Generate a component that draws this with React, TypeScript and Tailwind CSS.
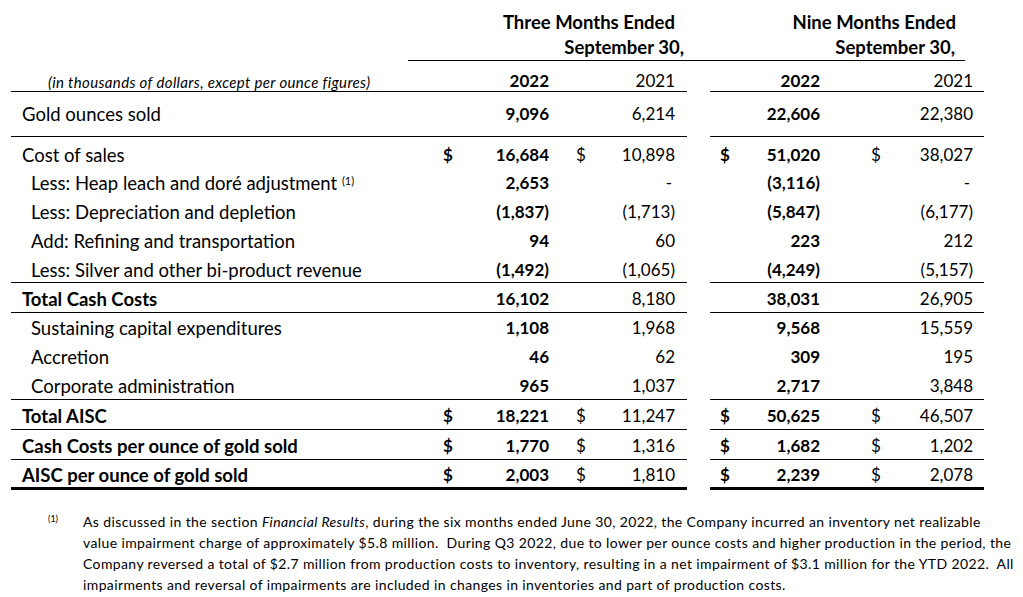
import React from "react";

type Cells = {
  a22: string;
  a21: string;
  b22: string;
  b21: string;
  dollar?: boolean;
};

type RowProps = {
  label: React.ReactNode;
  cells: Cells;
  h: string;
  pt: string;
  border?: "thin" | "thick" | "none";
  variant?: "main" | "sub" | "total";
};

const font = { fontFamily: "Lato, 'Liberation Sans', sans-serif" };

function Row({ label, cells, h, pt, border = "none", variant = "main" }: RowProps) {
  const line =
    border === "thin"
      ? "border-b border-black"
      : border === "thick"
      ? "border-b-[3px] border-black"
      : "";
  const labelCls =
    variant === "sub"
      ? "pl-[20px]"
      : variant === "total"
      ? "pl-[11px] font-bold"
      : "pl-[11px]";

  return (
    <div className="flex">
      {/* three months */}
      <div
        className={`grid w-[676px] grid-cols-[432px_14px_92px_39px_87px_12px] leading-[20px] ${h} ${pt} ${line}`}
      >
        <div className={`whitespace-nowrap text-[18.5px] ${labelCls}`}>{label}</div>
        <div className="font-bold">{cells.dollar ? "$" : ""}</div>
        <div className="text-right font-bold">{cells.a22}</div>
        <div className="pl-[27px]">{cells.dollar ? "$" : ""}</div>
        <div className={`text-right ${cells.a21 === "-" ? "pr-[3px]" : ""}`}>{cells.a21}</div>
        <div />
      </div>
      <div className="w-[23px]" />
      {/* nine months */}
      <div
        className={`grid w-[274px] grid-cols-[10px_14px_86px_63px_90px_11px] leading-[20px] ${h} ${pt} ${line}`}
      >
        <div />
        <div className="font-bold">{cells.dollar ? "$" : ""}</div>
        <div className="text-right font-bold">{cells.b22}</div>
        <div className="pl-[51px]">{cells.dollar ? "$" : ""}</div>
        <div className={`text-right ${cells.b21 === "-" ? "pr-[3px]" : ""}`}>{cells.b21}</div>
        <div />
      </div>
    </div>
  );
}

export default function App() {
  return (
    <div className="min-h-[597px] w-[1023px] bg-white pl-[11px] text-[17px] text-black" style={font}>
      {/* period headers */}
      <div className="ml-[397px] flex h-[61px] w-[557px] border-b border-black pt-[10px] text-[18.5px] font-bold leading-[25px]">
        <div className="w-[279px] text-right">
          <div className="pr-[12px]">Three Months Ended</div>
          <div className="pr-[3px]">September 30,</div>
        </div>
        <div className="w-[278px] text-right">
          <div className="pr-[9px]">Nine Months Ended</div>
          <div className="pr-[10px]">September 30,</div>
        </div>
      </div>

      <Row
        label={
          <span className="pl-[26px] text-[15px] italic tracking-[0.35px]">
            (in thousands of dollars, except per ounce figures)
          </span>
        }
        cells={{ a22: "2022", a21: "2021", b22: "2022", b21: "2021" }}
        h="h-[31px]"
        pt="pt-[10px]"
        border="thin"
      />
      <Row
        label="Gold ounces sold"
        cells={{ a22: "9,096", a21: "6,214", b22: "22,606", b21: "22,380" }}
        h="h-[45px]"
        pt="pt-[12px]"
        border="thin"
      />

      <Row
        label="Cost of sales"
        cells={{ a22: "16,684", a21: "10,898", b22: "51,020", b21: "38,027", dollar: true }}
        h="h-[29px]"
        pt="pt-[8px]"
      />
      <Row
        label={
          <>
            Less: Heap leach and doré adjustment <sup className="text-[11px]">(1)</sup>
          </>
        }
        variant="sub"
        cells={{ a22: "2,653", a21: "-", b22: "(3,116)", b21: "-" }}
        h="h-[29px]"
        pt="pt-[7px]"
      />
      <Row
        label="Less: Depreciation and depletion"
        variant="sub"
        cells={{ a22: "(1,837)", a21: "(1,713)", b22: "(5,847)", b21: "(6,177)" }}
        h="h-[29px]"
        pt="pt-[7px]"
      />
      <Row
        label="Add: Refining and transportation"
        variant="sub"
        cells={{ a22: "94", a21: "60", b22: "223", b21: "212" }}
        h="h-[29px]"
        pt="pt-[7px]"
      />
      <Row
        label="Less: Silver and other bi-product revenue"
        variant="sub"
        cells={{ a22: "(1,492)", a21: "(1,065)", b22: "(4,249)", b21: "(5,157)" }}
        h="h-[30px]"
        pt="pt-[7px]"
        border="thin"
      />

      <Row
        label="Total Cash Costs"
        variant="total"
        cells={{ a22: "16,102", a21: "8,180", b22: "38,031", b21: "26,905" }}
        h="h-[30px]"
        pt="pt-[6px]"
        border="thin"
      />

      <Row
        label="Sustaining capital expenditures"
        variant="sub"
        cells={{ a22: "1,108", a21: "1,968", b22: "9,568", b21: "15,559" }}
        h="h-[29px]"
        pt="pt-[5px]"
      />
      <Row
        label="Accretion"
        variant="sub"
        cells={{ a22: "46", a21: "62", b22: "309", b21: "195" }}
        h="h-[29px]"
        pt="pt-[5px]"
      />
      <Row
        label="Corporate administration"
        variant="sub"
        cells={{ a22: "965", a21: "1,037", b22: "2,717", b21: "3,848" }}
        h="h-[29px]"
        pt="pt-[5px]"
        border="thin"
      />

      <Row
        label="Total AISC"
        variant="total"
        cells={{ a22: "18,221", a21: "11,247", b22: "50,625", b21: "46,507", dollar: true }}
        h="h-[30px]"
        pt="pt-[6px]"
        border="thin"
      />
      <Row
        label="Cash Costs per ounce of gold sold"
        variant="total"
        cells={{ a22: "1,770", a21: "1,316", b22: "1,682", b21: "1,202", dollar: true }}
        h="h-[30px]"
        pt="pt-[6px]"
        border="thin"
      />
      <Row
        label="AISC per ounce of gold sold"
        variant="total"
        cells={{ a22: "2,003", a21: "1,810", b22: "2,239", b21: "2,078", dollar: true }}
        h="h-[30px]"
        pt="pt-[5px]"
        border="thick"
      />

      {/* footnote */}
      <div className="mt-[21px] flex text-[14px] leading-[21px] tracking-[0.38px]">
        <div className="w-[72px] pl-[37px] text-[9px] leading-[15px] tracking-normal">(1)</div>
        <div className="whitespace-nowrap">
          As discussed in the section <i>Financial Results</i>, during the six months ended June 30, 2022, the
          Company incurred an inventory net realizable
          <br />
          value impairment charge of approximately $5.8 million.&nbsp; During Q3 2022, due to lower per ounce
          costs and higher production in the period, the
          <br />
          Company reversed a total of $2.7 million from production costs to inventory, resulting in a net
          impairment of $3.1 million for the YTD 2022.&nbsp; All
          <br />
          impairments and reversal of impairments are included in changes in inventories and part of production
          costs.
        </div>
      </div>
    </div>
  );
}
